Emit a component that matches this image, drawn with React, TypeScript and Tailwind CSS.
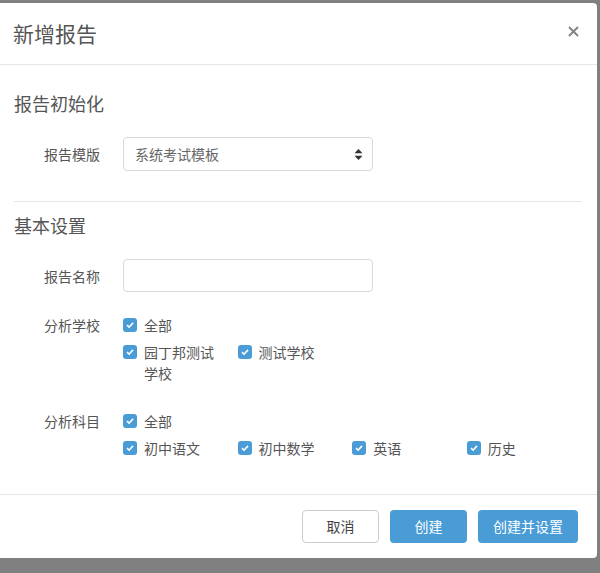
import React from "react";

const font = { fontFamily: '"Noto Sans CJK SC", "Noto Sans", sans-serif' };

function Check({ label, className = "" }: { label: string; className?: string }) {
  return (
    <label className={"flex items-start text-[14px] leading-[20px] text-[#555] " + className}>
      <span className="mt-[3px] mr-[7px] flex h-[14px] w-[14px] shrink-0 items-center justify-center rounded-[3px] bg-[#4a9cd6]">
        <svg width="8" height="8" viewBox="0 0 8 8" fill="none">
          <path d="M1 4.2 L3.1 6.2 L7 1.9" stroke="#fff" strokeWidth="1.6" />
        </svg>
      </span>
      <span className="flex-1">{label}</span>
    </label>
  );
}

function Row({ label, children, className = "" }: { label: string; children: React.ReactNode; className?: string }) {
  return (
    <div className={"flex " + className}>
      <div className="w-[86px] shrink-0 text-right text-[14px] leading-[20px] text-[#555]">{label}</div>
      <div className="ml-[23px] flex-1">{children}</div>
    </div>
  );
}

export default function App() {
  return (
    <div className="h-[573px] w-[600px] overflow-hidden bg-[#808080] pt-[3px]" style={font}>
      <div className="flex h-[555px] w-[597px] flex-col rounded-br-[4px] rounded-tr-[4px] bg-white">
        <div className="flex h-[62px] shrink-0 items-center justify-between border-b border-[#e5e5e5] pl-[13px] pr-[18px]">
          <span className="mb-[2px] text-[21px] leading-[30px] text-[#555]">新增报告</span>
          <svg width="11" height="11" viewBox="0 0 11 11" className="mb-[4px]">
            <path d="M1 1 L10 10 M10 1 L1 10" stroke="#858585" strokeWidth="2" />
          </svg>
        </div>
        <div className="flex-1 pl-[14px] pr-[15px]">
          <h2 className="mt-[25px] text-[18px] leading-[26px] font-normal text-[#555]">报告初始化</h2>
          <Row label="报告模版" className="mt-[21px] items-center">
            <div className="flex h-[34px] w-[250px] items-center justify-between rounded-[4px] border border-[#d9d9d9] pl-[11px] pr-[9px] text-[14px] text-[#666]">
              <span>系统考试模板</span>
              <svg width="9" height="11" viewBox="0 0 9 11">
                <path d="M4.5 0 L8.5 4.3 H0.5 Z M4.5 11 L8.5 6.7 H0.5 Z" fill="#333" />
              </svg>
            </div>
          </Row>
          <div className="mt-[30px] border-t border-[#e5e5e5]" />
          <h2 className="mt-[10px] text-[18px] leading-[26px] font-normal text-[#555]">基本设置</h2>
          <Row label="报告名称" className="mt-[21px] items-center">
            <div className="h-[33px] w-[250px] rounded-[4px] border border-[#d9d9d9]" />
          </Row>
          <Row label="分析学校" className="mt-[23px]">
            <Check label="全部" />
            <div className="mt-[7px] grid grid-cols-[repeat(4,114.6px)]">
              <Check label="园丁邦测试学校" className="pr-[10px] [&>span:last-child]:leading-[21px]" />
              <Check label="测试学校" />
            </div>
          </Row>
          <Row label="分析科目" className="mt-[27px]">
            <Check label="全部" />
            <div className="mt-[7px] grid grid-cols-[repeat(4,114.6px)]">
              <Check label="初中语文" />
              <Check label="初中数学" />
              <Check label="英语" />
              <Check label="历史" />
            </div>
          </Row>
        </div>
        <div className="flex h-[64px] shrink-0 items-start justify-end gap-[11px] border-t border-[#e5e5e5] pr-[19px] pt-[15px] text-[14px]">
          <button className="h-[33px] w-[77px] rounded-[4px] border border-[#ccc] bg-white text-[#444]">取消</button>
          <button className="h-[33px] w-[77px] rounded-[4px] bg-[#4a9cd6] text-white">创建</button>
          <button className="h-[33px] w-[100px] rounded-[4px] bg-[#4a9cd6] text-white">创建并设置</button>
        </div>
      </div>
    </div>
  );
}
